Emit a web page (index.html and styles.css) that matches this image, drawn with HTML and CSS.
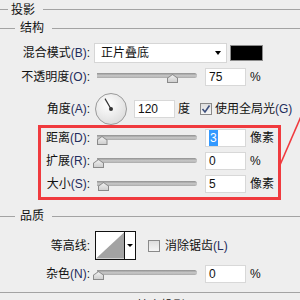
FILE: index.html
```html
<!DOCTYPE html>
<html lang="zh-CN">

<head>
    <meta charset="UTF-8">
    <title>投影</title>
    <link rel="stylesheet" href="styles.css">
</head>

<body>
    <div class="legend legend-top"><span>投影</span></div>
    <div class="legend legend-sub"><span>结构</span></div>

    <div class="row row-blend">
        <div class="label">混合模式<span class="key">(B)</span>:</div>
        <div class="select"><span>正片叠底</span><i class="caret"></i></div>
        <div class="swatch"></div>
    </div>

    <div class="row row-opacity">
        <div class="label">不透明度<span class="key">(O)</span>:</div>
        <div class="slider"><div class="track"></div><div class="thumb" style="left: 75%"></div></div>
        <div class="field">75</div>
        <span class="unit">%</span>
    </div>

    <div class="row row-angle">
        <div class="label">角度<span class="key">(A)</span>:</div>
        <svg class="dial" width="32" height="32" viewBox="0 0 32 32">
            <defs>
                <radialGradient id="dialFill" cx="0.4" cy="0.35" r="0.7">
                    <stop offset="0" stop-color="#ffffff" />
                    <stop offset="1" stop-color="#dcdcdc" />
                </radialGradient>
            </defs>
            <circle cx="16" cy="16" r="15.5" fill="url(#dialFill)" stroke="#9a9a9a" />
            <line x1="16" y1="16" x2="10" y2="5.6" stroke="#333" stroke-width="1.2" />
            <circle cx="16" cy="16" r="2" fill="#333" />
        </svg>
        <div class="field field-angle">120</div>
        <span class="unit">度</span>
        <span class="check checked">
            <svg width="10" height="10" viewBox="0 0 10 10"><path d="M1.5 5 L4 8 L8.5 1.5" fill="none" stroke="#3d4f7c" stroke-width="1.6" /></svg>
        </span>
        <span class="check-text">使用全局光<span class="key">(G)</span></span>
    </div>

    <div class="highlight">
        <div class="row">
            <div class="label">距离<span class="key">(D)</span>:</div>
            <div class="slider"><div class="track"></div><div class="thumb" style="left: 4.5%"></div></div>
            <div class="field"><span class="selected">3</span></div>
            <span class="unit">像素</span>
        </div>
        <div class="row">
            <div class="label">扩展<span class="key">(R)</span>:</div>
            <div class="slider"><div class="track"></div><div class="thumb" style="left: 1%"></div></div>
            <div class="field">0</div>
            <span class="unit">%</span>
        </div>
        <div class="row">
            <div class="label">大小<span class="key">(S)</span>:</div>
            <div class="slider"><div class="track"></div><div class="thumb" style="left: 6%"></div></div>
            <div class="field">5</div>
            <span class="unit">像素</span>
        </div>
    </div>

    <div class="legend legend-quality"><span>品质</span></div>

    <div class="row row-contour">
        <div class="label">等高线:</div>
        <div class="contour">
            <svg class="curve" width="29" height="27" viewBox="0 0 29 27">
                <rect width="29" height="27" fill="#fff" />
                <polygon points="0,27 29,0 29,27" fill="#a3a3a3" />
            </svg>
            <div class="contour-btn"><i class="caret caret-small"></i></div>
        </div>
        <span class="check"></span>
        <span class="check-text">消除锯齿<span class="key">(L)</span></span>
    </div>

    <div class="row row-noise">
        <div class="label">杂色<span class="key">(N)</span>:</div>
        <div class="slider"><div class="track"></div><div class="thumb" style="left: 1%"></div></div>
        <div class="field">0</div>
        <span class="unit">%</span>
    </div>

    <div class="divider"></div>

    <div class="row row-knock">
        <span class="check"></span>
        <span class="check-text">图层挖空投影<span class="key">(U)</span></span>
    </div>

    <svg class="pointer" width="300" height="300" viewBox="0 0 300 300">
        <line x1="280" y1="165" x2="306" y2="105" stroke="#f03a3e" stroke-width="1.6" />
    </svg>
</body>

</html>
```

FILE: styles.css
```css
* {
    padding: 0px;
    margin: 0px;
    box-sizing: border-box;
}

body {
    width: 300px;
    height: 300px;
    overflow: hidden;
    position: relative;
    background-color: #eeeeee;
    font-family: "Liberation Sans", "Noto Sans CJK SC", sans-serif;
    font-size: 12px;
    line-height: 14px;
    color: #111111;
}

.key {
    color: #1f2c5c;
}

/* group titles with a rule on both sides */
.legend {
    display: flex;
    align-items: center;
}

.legend::before,
.legend::after {
    content: "";
    height: 1px;
    background-color: #a3a3a3;
}

.legend::after {
    flex: 1;
}

.legend-top {
    height: 19px;
}

.legend-top::before {
    width: 8px;
}

.legend-top span {
    padding: 0 8px 0 3px;
}

.legend-sub,
.legend-quality {
    height: 18px;
}

.legend-sub::before,
.legend-quality::before {
    width: 15px;
}

.legend-sub span,
.legend-quality span {
    padding: 0 8px 0 5px;
}

.legend-quality {
    margin-top: 7px;
}

/* rows */
.row {
    display: flex;
    align-items: center;
    height: 18px;
}

.label {
    width: 90px;
    flex: none;
    text-align: right;
    white-space: nowrap;
}

.row-blend {
    margin-top: 6px;
    height: 20px;
}

.row-opacity {
    margin-top: 5px;
}

.row-angle {
    margin-top: 6px;
    height: 33px;
}

.row-contour {
    margin-top: 6px;
    height: 29px;
}

.row-noise {
    margin-top: 5px;
}

.select {
    margin-left: 4px;
    width: 133px;
    height: 20px;
    display: flex;
    align-items: center;
    justify-content: space-between;
    padding: 0 5px 0 6px;
    background-color: #ffffff;
    border: 1px solid #d6d6d6;
}

.caret {
    width: 0;
    height: 0;
    border-left: 3px solid transparent;
    border-right: 3px solid transparent;
    border-top: 4px solid #000000;
}

.swatch {
    margin-left: 3px;
    width: 33px;
    height: 16px;
    background-color: #000000;
    border: 1px solid #8c8c8c;
}

/* sliders */
.slider {
    position: relative;
    margin-left: 7px;
    width: 100px;
    height: 18px;
}

.track {
    margin-top: 5px;
    height: 5px;
    border-radius: 0 3px 3px 0;
    background: linear-gradient(#8f8f8f, #c9c9c9 55%, #a9a9a9);
}

.thumb {
    position: absolute;
    top: 6px;
    width: 11px;
    height: 9px;
    margin-left: -5px;
    background-color: #dcdcdc;
    clip-path: polygon(50% 0, 100% 45%, 100% 100%, 0 100%, 0 45%);
}

.thumb::after {
    content: "";
    position: absolute;
    top: 1px;
    left: 1px;
    right: 1px;
    bottom: 1px;
    background: linear-gradient(#f0f0f0, #cfcfcf);
    clip-path: polygon(50% 0, 100% 45%, 100% 100%, 0 100%, 0 45%);
}

.thumb {
    background-color: #8a8a8a;
}

.field {
    margin-left: 8px;
    width: 41px;
    height: 18px;
    padding-left: 3px;
    line-height: 16px;
    background-color: #ffffff;
    border: 1px solid #d8d8d8;
    color: #111111;
}

.selected {
    display: inline-block;
    padding: 0 1px;
    background-color: #3399ff;
    color: #ffffff;
}

.unit {
    margin-left: 4px;
}

/* angle */
.dial {
    margin-left: 5px;
    flex: none;
}

.field-angle {
    margin-left: 7px;
}

.row-angle .unit {
    margin-left: 3px;
}

.check {
    width: 12px;
    height: 12px;
    flex: none;
    display: flex;
    align-items: center;
    justify-content: center;
    border: 1px solid #8a8a8a;
    background: linear-gradient(#dedede, #f6f6f6);
}

.row-angle .check {
    margin-left: 10px;
}

.check-text {
    margin-left: 3px;
    white-space: nowrap;
}

/* highlighted block */
.highlight {
    margin-left: 38px;
    width: 243px;
    border: 3px solid #f03a3e;
    padding: 1px 0 4px;
    display: flex;
    flex-direction: column;
    gap: 5px;
}

.highlight .label {
    width: 49px;
}

.highlight .slider {
    height: 18px;
}

.highlight .track {
    margin-top: 6px;
}

.highlight .thumb {
    top: 7px;
}

/* contour */
.contour {
    margin-left: 5px;
    width: 41px;
    height: 29px;
    display: flex;
    border: 1px solid #111111;
    background-color: #ffffff;
}

.curve {
    display: block;
    border-right: 1px solid #111111;
}

.contour-btn {
    flex: 1;
    display: flex;
    align-items: center;
    justify-content: center;
}

.caret-small {
    border-left-width: 3px;
    border-right-width: 3px;
    border-top-width: 3px;
}

.row-contour .check {
    margin-left: 12px;
}

.row-contour .check-text {
    margin-left: 5px;
}

.divider {
    margin-top: 9px;
    height: 1px;
    background-color: #a3a3a3;
}

.row-knock {
    margin-top: 4px;
    padding-left: 98px;
}

.pointer {
    position: absolute;
    top: 0;
    left: 0;
    pointer-events: none;
}
```
